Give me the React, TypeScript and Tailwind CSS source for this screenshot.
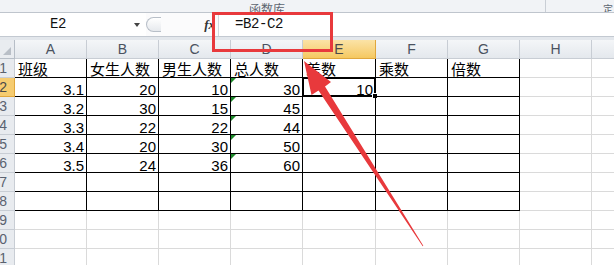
import React from "react";

const cols = ["A", "B", "C", "D", "E", "F", "G", "H", "I"];

const rows: (string | number)[][] = [
  ["班级", "女生人数", "男生人数", "总人数", "差数", "乘数", "倍数", "", ""],
  ["3.1", 20, 10, 30, 10, "", "", "", ""],
  ["3.2", 30, 15, 45, "", "", "", "", ""],
  ["3.3", 22, 22, 44, "", "", "", "", ""],
  ["3.4", 20, 30, 50, "", "", "", "", ""],
  ["3.5", 24, 36, 60, "", "", "", "", ""],
  ["", "", "", "", "", "", "", "", ""],
  ["", "", "", "", "", "", "", "", ""],
  ["", "", "", "", "", "", "", "", ""],
  ["", "", "", "", "", "", "", "", ""],
  ["", "", "", "", "", "", "", "", ""],
];

const App: React.FC = () => {
  return (
    <div className="relative w-[614px] h-[265px] overflow-hidden bg-white font-['Liberation_Sans','Noto_Sans_CJK_SC',sans-serif]">
      {/* ribbon bottom */}
      <div className="h-[13px] bg-[#f1f3f6] border-b border-[#bfc5cd] flex items-end overflow-hidden text-[12px] leading-[12px] text-[#5d6570] font-['Noto_Sans_CJK_SC',sans-serif]">
        <div className="w-[249px]" />
        <div className="w-[296px] -mb-[3px]">函数库</div>
        <div className="w-px h-full bg-[#c9ced5]" />
        <div className="flex-1 flex justify-end pr-[1px] -mb-[3px] text-[10px]">定</div>
      </div>

      {/* formula bar */}
      <div className="h-[24px] flex items-stretch bg-white border-b border-[#c3c9d1]">
        <div className="w-[146px] flex items-center relative">
          <span className="pl-[50px] font-['Liberation_Mono',monospace] text-[14px] tracking-[-0.4px] text-[#111]">E2</span>
          <span className="absolute left-[134px] top-[10px] w-0 h-0 border-l-[3px] border-r-[3px] border-t-[4px] border-l-transparent border-r-transparent border-t-[#444]" />
        </div>
        <div className="w-[72px] flex items-center bg-[#fbfbfc]">
          <div className="w-[15px] h-[15px] rounded-l-full border border-r-0 border-[#b8bfc8] bg-gradient-to-b from-[#ffffff] to-[#e6e9ed]" />
          <div className="flex-1 flex justify-end pr-[3px]">
            <span className="font-['Liberation_Serif',serif] italic font-bold text-[13px] text-[#333]">fx</span>
          </div>
        </div>
        <div className="flex-1 border-l border-[#d3d8de] flex items-center pl-[16px]">
          <span className="font-['Liberation_Mono',monospace] text-[14px] tracking-[-0.4px] text-[#111]">=B2-C2</span>
        </div>
      </div>

      <div className="h-[3px] bg-[#e3e7ec]" />

      {/* sheet grid */}
      <div className="-ml-[10px] grid grid-cols-[25px_72px_72px_72px_72px_73px_72px_72px_72px_72px]">
        {/* select-all corner */}
        <div className="h-[19px] bg-[#e9ecf0] border-r border-b border-[#b7bec7] flex items-end justify-end pr-[3px] pb-[3px]">
          <svg width="8" height="8" viewBox="0 0 8 8">
            <polygon points="8,0 8,8 0,8" fill="#b9bfc7" />
          </svg>
        </div>
        {cols.map((c) => (
          <div
            key={c}
            className={
              c === "E"
                ? "h-[19px] border-r border-b border-[#e0a73d] bg-gradient-to-b from-[#fbe3a6] to-[#f5c85f] flex items-center justify-center text-[14px] text-[#4a4a4a]"
                : "h-[19px] border-r border-b border-[#c8cdd4] bg-gradient-to-b from-[#f4f6f8] to-[#e4e8ed] flex items-center justify-center text-[14px] text-[#4a5260]"
            }
          >
            {c}
          </div>
        ))}

        {rows.map((row, r) => (
          <React.Fragment key={r}>
            <div
              className={
                r === 1
                  ? "h-[19px] border-r border-b border-[#e0a73d] bg-[#f6cc70] flex items-center justify-end pr-[7px] text-[14px] text-[#4a4a4a]"
                  : "h-[19px] border-r border-b border-[#c8cdd4] bg-[#e8ebef] flex items-center justify-end pr-[7px] text-[14px] text-[#5a6270]"
              }
            >
              {r + 1}
            </div>
            {row.map((v, c) => {
              const inTable = r < 8 && c < 7;
              const isText = r === 0;
              return (
                <div
                  key={c}
                  className={
                    (inTable ? "border-black " : "border-[#dadada] ") +
                    "relative h-[19px] border-r border-b flex items-end leading-[13px] " +
                    (isText
                      ? "justify-start pl-[3px] text-[15px] text-black font-['Noto_Sans_CJK_SC',sans-serif] leading-[15px] pb-[1px]"
                      : "justify-end pr-[2px] text-[15px] text-black")
                  }
                >
                  {c === 3 && r >= 1 && r <= 5 && (
                    <span className="absolute left-0 top-0 w-0 h-0 border-t-[5px] border-r-[5px] border-t-[#1d8a2b] border-r-transparent" />
                  )}
                  {r === 1 && c === 4 && (
                    <span className="absolute -left-[1px] -top-[1px] w-[74px] h-[20px] border-2 border-black">
                      <span className="absolute -right-[4px] -bottom-[4px] w-[6px] h-[6px] bg-black border border-white" />
                    </span>
                  )}
                  {v}
                </div>
              );
            })}
          </React.Fragment>
        ))}
      </div>

      {/* red annotation */}
      <svg className="absolute left-0 top-0 pointer-events-none" width="614" height="265" viewBox="0 0 614 265">
        <rect x="213.5" y="13.5" width="118" height="37" fill="none" stroke="#e8393c" strokeWidth="3" />
        <polygon
          points="304,61 331,82 325,86.5 423.3,245.8 422.7,246.2 318.5,90.5 311.5,95"
          fill="#e8393c"
        />
      </svg>
    </div>
  );
};

export default App;
